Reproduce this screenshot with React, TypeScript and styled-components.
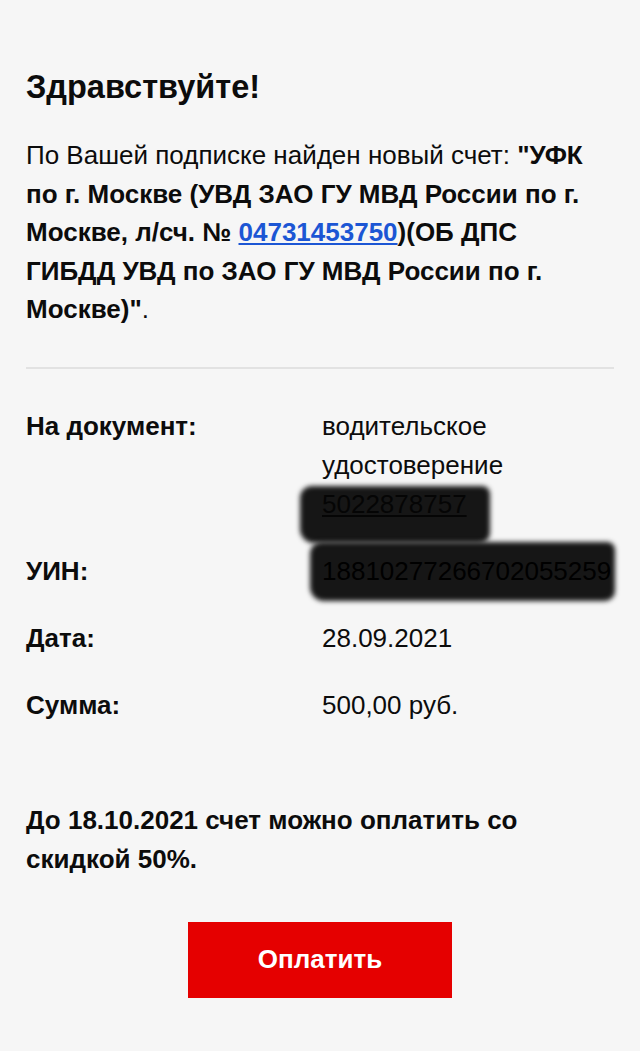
import React from "react";
import styled, { createGlobalStyle } from "styled-components";

const GlobalStyle = createGlobalStyle`
  body {
    margin: 0;
    background: #f6f6f6;
    font-family: "Liberation Sans", Arial, sans-serif;
    color: #0c0c0c;
  }
`;

const Page = styled.div`
  padding: 64px 26px 50px;
`;

const Title = styled.h1`
  margin: 0;
  font-size: 32.5px;
  line-height: 46px;
  font-weight: 700;
`;

const Intro = styled.p`
  margin: 26px 0 0;
  max-width: 574px;
  font-size: 26px;
  line-height: 38.5px;
`;

const Link = styled.a`
  color: #1c56d4;
  text-decoration: underline;
`;

const Divider = styled.hr`
  margin: 38px 0 0;
  border: 0;
  border-top: 2px solid #e2e2e2;
`;

const Details = styled.dl`
  margin: 38px 0 0;
  display: grid;
  grid-template-columns: 296px 1fr;
  row-gap: 28px;
  font-size: 26px;
  line-height: 39px;
`;

const Label = styled.dt`
  font-weight: 700;
`;

const Value = styled.dd`
  margin: 0;
`;

const Redacted = styled.span`
  position: relative;
  display: inline-block;
`;

const Smudge = styled.span<{ $l: number; $t: number; $w: number; $h: number }>`
  position: absolute;
  left: ${(p) => p.$l}px;
  top: ${(p) => p.$t}px;
  width: ${(p) => p.$w}px;
  height: ${(p) => p.$h}px;
  background: #161616;
  border-radius: 12px 8px 10px 14px;
  filter: blur(2.5px);
`;

const Hidden = styled.span`
  position: relative;
  color: #000;
`;

const DocLink = styled.a`
  position: relative;
  color: #050505;
  text-decoration: underline;
`;

const Note = styled.p`
  margin: 76px 0 0;
  font-size: 26px;
  line-height: 39px;
  font-weight: 700;
`;

const Actions = styled.div`
  display: flex;
  justify-content: center;
  margin-top: 43px;
`;

const PayButton = styled.button`
  width: 264px;
  height: 76px;
  border: 0;
  border-radius: 0;
  background: #e50000;
  color: #fff;
  font-family: inherit;
  font-size: 26px;
  font-weight: 700;
`;

export default function App() {
  return (
    <>
      <GlobalStyle />
      <Page>
        <Title>Здравствуйте!</Title>
        <Intro>
          По Вашей подписке найден новый счет:{" "}
          <b>
            "УФК по г. Москве (УВД ЗАО ГУ МВД России по г. Москве, л/сч. №{" "}
            <Link href="#">04731453750</Link>)(ОБ ДПС ГИБДД УВД по ЗАО ГУ МВД
            России по г. Москве)"
          </b>
          .
        </Intro>
        <Divider />
        <Details>
          <Label>На документ:</Label>
          <Value>
            водительское удостоверение{" "}
            <Redacted>
              <Smudge $l={-22} $t={1} $w={190} $h={57} />
              <DocLink href="#">5022878757</DocLink>
            </Redacted>
          </Value>
          <Label>УИН:</Label>
          <Value>
            <Redacted>
              <Smudge $l={-12} $t={-10} $w={305} $h={59} />
              <Hidden>18810277266702055259</Hidden>
            </Redacted>
          </Value>
          <Label>Дата:</Label>
          <Value>28.09.2021</Value>
          <Label>Сумма:</Label>
          <Value>500,00 руб.</Value>
        </Details>
        <Note>До 18.10.2021 счет можно оплатить со скидкой 50%.</Note>
        <Actions>
          <PayButton>Оплатить</PayButton>
        </Actions>
      </Page>
    </>
  );
}
